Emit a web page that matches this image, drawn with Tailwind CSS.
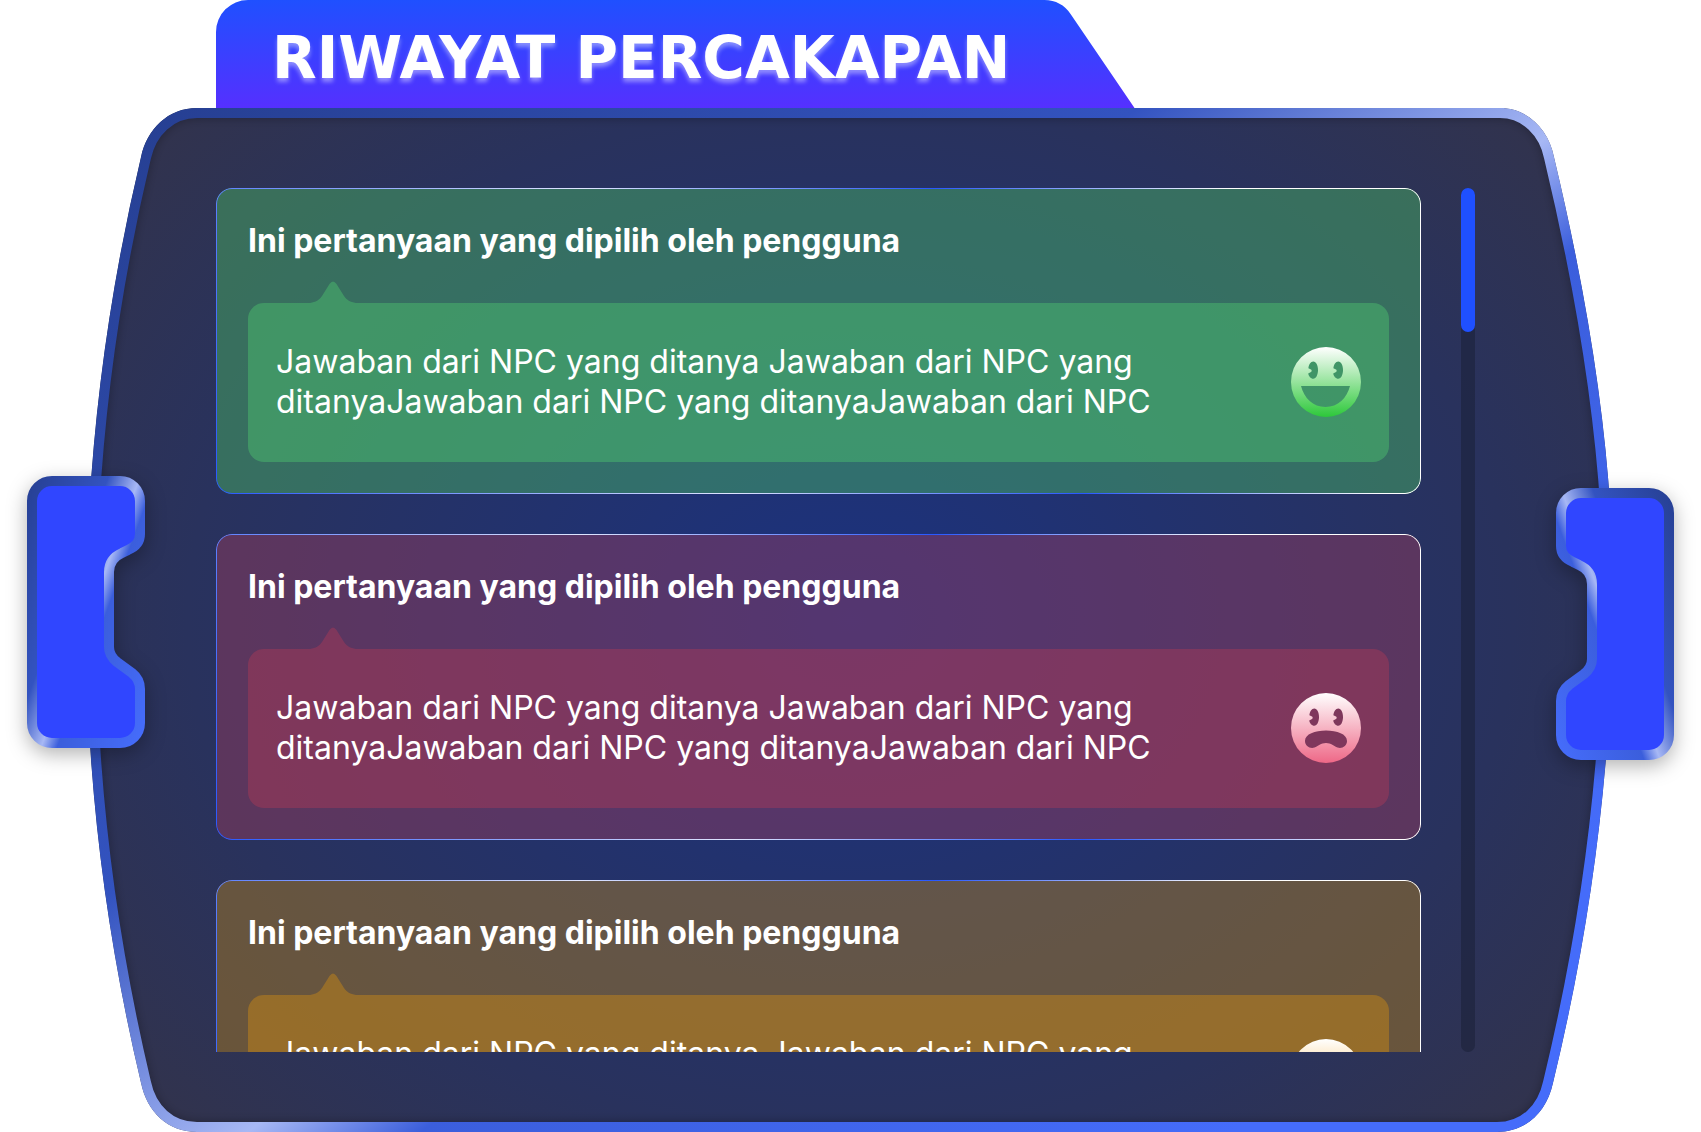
<!DOCTYPE html>
<html lang="id">
<head>
<meta charset="utf-8">
<meta name="viewport" content="width=device-width, initial-scale=1">
<title>Riwayat Percakapan</title>
<script src="https://cdn.jsdelivr.net/npm/@tailwindcss/browser@4"></script>
</head>
<body class="bg-white font-[Inter,sans-serif] text-white">
<main class="relative flex h-screen min-h-[640px] flex-col overflow-hidden">

  <!-- Panel frame -->
  <svg class="absolute inset-0 size-full" viewBox="0 0 1701 1132" preserveAspectRatio="none" aria-hidden="true">
    <defs>
      <linearGradient id="frame" gradientUnits="userSpaceOnUse" x1="104" y1="136" x2="1003" y2="1310">
        <stop offset="0" stop-color="#263f92"/>
        <stop offset=".41" stop-color="#3353c0"/>
        <stop offset=".594" stop-color="#a7b8f5"/>
        <stop offset=".665" stop-color="#3b5edc"/>
        <stop offset="1" stop-color="#456cfa"/>
      </linearGradient>
      <radialGradient id="panel" gradientUnits="userSpaceOnUse" cx="0" cy="0" r="1" gradientTransform="translate(850 620) scale(920 720)">
        <stop offset="0" stop-color="#1b327f"/>
        <stop offset=".72" stop-color="#29325d"/>
        <stop offset="1" stop-color="#31334e"/>
      </radialGradient>
      <filter id="soft" x="-5%" y="-5%" width="110%" height="110%"><feGaussianBlur stdDeviation="5"/></filter>
      <path id="shape" d="M197 108H1500C1528 108 1549 130 1554 157Q1613 404 1613 590Q1613 836 1553 1083C1547 1111 1527 1132 1497 1132H197C168 1132 147 1112 141 1083Q31 620 141 157C147 129 168 108 197 108Z"/>
      <clipPath id="inside"><use href="#shape"/></clipPath>
    </defs>
    <g clip-path="url(#inside)">
      <use href="#shape" fill="url(#panel)"/>
      <use href="#shape" fill="none" stroke="#000" stroke-opacity=".25" stroke-width="22" filter="url(#soft)"/>
      <use href="#shape" fill="none" stroke="url(#frame)" stroke-width="20"/>
    </g>
  </svg>

  <!-- Left grip -->
  <svg class="absolute left-[27px] top-[calc(50%-90px)] h-[272px] w-[118px] overflow-visible drop-shadow-[0_6px_10px_rgb(0_0_0/0.3)]" viewBox="27 476 118 272" aria-hidden="true">
    <defs>
      <linearGradient id="grip" gradientUnits="userSpaceOnUse" x1="177" y1="64" x2="363" y2="132">
        <stop offset="0" stop-color="#263f92"/>
        <stop offset=".39" stop-color="#3353c0"/>
        <stop offset=".54" stop-color="#a7b8f5"/>
        <stop offset=".616" stop-color="#3b5edc"/>
        <stop offset="1" stop-color="#456cfa"/>
      </linearGradient>
      <path id="grip-shape" stroke-width="10" d="M52 481H120A20 20 0 0 1 140 501V534C140 542 135 547 128 550L122 553C113 557 109 563 109 572V647C109 654 112 658 117 662L132 673C137 677 140 682 140 689V723A20 20 0 0 1 120 743H52A20 20 0 0 1 32 723V501A20 20 0 0 1 52 481Z"/>
    </defs>
    <use href="#grip-shape" fill="#3046ff" stroke="url(#grip)"/>
  </svg>

  <!-- Right grip -->
  <div class="absolute right-[27px] top-[calc(50%-78px)] drop-shadow-[0_6px_10px_rgb(0_0_0/0.3)]">
    <svg class="h-[272px] w-[118px] -scale-x-100 overflow-visible" viewBox="27 476 118 272" aria-hidden="true">
      <use href="#grip-shape" fill="#3046ff" stroke="url(#grip)"/>
    </svg>
  </div>

  <!-- Title tab -->
  <header class="relative ml-[216px] flex h-[108px] w-[54%] shrink-0 items-center pl-14">
    <svg class="absolute inset-0 size-full" viewBox="0 0 919 108" preserveAspectRatio="none" aria-hidden="true">
      <defs>
        <linearGradient id="tab" x1="0" y1="0" x2="0" y2="1">
          <stop offset="0" stop-color="#1f50ff"/>
          <stop offset="1" stop-color="#5530ff"/>
        </linearGradient>
      </defs>
      <path fill="url(#tab)" d="M0 108V32A32 32 0 0 1 32 0H829C840 0 849 5 855 14L919 108Z"/>
    </svg>
    <h1 class="relative whitespace-nowrap pt-2 font-['DejaVu_Sans',sans-serif] text-[58px]/[64px] font-bold [text-shadow:0_4px_4px_rgb(255_255_255/0.4)]">RIWAYAT PERCAKAPAN</h1>
  </header>

  <section class="relative flex min-h-0 flex-1 gap-10 pb-20 pl-[216px] pr-[226px] pt-20" aria-label="Riwayat percakapan">
    <div class="flex min-w-0 flex-1 flex-col gap-10 overflow-y-auto [scrollbar-width:none]">

      <article class="relative shrink-0 rounded-2xl bg-[#4dcb63]/40 p-8 before:pointer-events-none before:absolute before:inset-0 before:rounded-2xl before:bg-[linear-gradient(64deg,#2858ff,#dfe5ff_38%,#2858ff_64%,#fff_86%)] before:p-px before:[mask:linear-gradient(#000_0_0)_content-box_exclude,linear-gradient(#000_0_0)]">
        <h2 class="text-[32px]/[42px] font-bold">Ini pertanyaan yang dipilih oleh pengguna</h2>
        <div class="relative mt-[41px] flex items-center justify-between rounded-2xl bg-[#4fd070]/40 px-7 pb-10 pt-[39px]">
          <svg class="absolute bottom-full left-[62px] h-[22px] w-[46px]" viewBox="0 0 46 22" fill="#4fd070" fill-opacity=".4" aria-hidden="true"><path d="M0 22C6 21 9 19 12 15L19.500 3Q23-2 26.500 3L34 15C37 19 40 21 46 22Z"/></svg>
          <p class="text-[32px]/[40px]">Jawaban dari NPC yang ditanya Jawaban dari NPC yang<br>ditanyaJawaban dari NPC yang ditanyaJawaban dari NPC</p>
          <svg class="size-[70px] shrink-0" viewBox="0 0 70 70" role="img" aria-label="Senang">
            <defs><linearGradient id="happy" x1="0" y1="0" x2="0" y2="1"><stop stop-color="#fff"/><stop offset="1" stop-color="#2dc83a"/></linearGradient></defs>
            <path fill="url(#happy)" fill-rule="evenodd" d="M35 0a35 35 0 1 0 0 70a35 35 0 0 0 0-70ZM22.3 14.5c2.8 0 4.7 3.8 4.7 8.5s-1.9 8.8-4.7 8.8c-2.6 0-4.6-2.6-5.1-5.3l2.8-1.5c.9-.5.9-1.9 0-2.4l-2.6-1.4c.3-3.6 2.3-6.7 4.9-6.7ZM47.3 14.5c2.8 0 4.7 3.8 4.7 8.5s-1.9 8.8-4.7 8.8c-2.6 0-4.6-2.6-5.1-5.3l2.8-1.5c.9-.5.9-1.9 0-2.4l-2.6-1.4c.3-3.6 2.3-6.7 4.9-6.7ZM10 39H59C56 51 47 60 34.500 60S13 51 10 39Z"/>
          </svg>
        </div>
      </article>

      <article class="relative shrink-0 rounded-2xl bg-[#aa3c5c]/40 p-8 before:pointer-events-none before:absolute before:inset-0 before:rounded-2xl before:bg-[linear-gradient(64deg,#2858ff,#dfe5ff_38%,#2858ff_64%,#fff_86%)] before:p-px before:[mask:linear-gradient(#000_0_0)_content-box_exclude,linear-gradient(#000_0_0)]">
        <h2 class="text-[32px]/[42px] font-bold">Ini pertanyaan yang dipilih oleh pengguna</h2>
        <div class="relative mt-[41px] flex items-center justify-between rounded-2xl bg-[#b63a56]/40 px-7 pb-10 pt-[39px]">
          <svg class="absolute bottom-full left-[62px] h-[22px] w-[46px]" viewBox="0 0 46 22" fill="#b63a56" fill-opacity=".4" aria-hidden="true"><path d="M0 22C6 21 9 19 12 15L19.500 3Q23-2 26.500 3L34 15C37 19 40 21 46 22Z"/></svg>
          <p class="text-[32px]/[40px]">Jawaban dari NPC yang ditanya Jawaban dari NPC yang<br>ditanyaJawaban dari NPC yang ditanyaJawaban dari NPC</p>
          <svg class="size-[70px] shrink-0" viewBox="0 0 70 70" role="img" aria-label="Kecewa">
            <defs><linearGradient id="sad" x1="0" y1="0" x2="0" y2="1"><stop stop-color="#fff"/><stop offset="1" stop-color="#ee6887"/></linearGradient></defs>
            <path fill="url(#sad)" fill-rule="evenodd" d="M35 0a35 35 0 1 0 0 70a35 35 0 0 0 0-70ZM23.300 15.500c2.800 0 4.700 3.800 4.700 8.500s-1.900 8.800-4.700 8.800c-2.600 0-4.600-2.600-5.100-5.300l2.800-1.500c.9-.5.9-1.900 0-2.400l-2.600-1.400c.3-3.600 2.300-6.700 4.900-6.700ZM47.300 15.500c2.800 0 4.700 3.800 4.700 8.500s-1.900 8.800-4.700 8.800c-2.600 0-4.600-2.600-5.100-5.300l2.800-1.500c.9-.5.9-1.900 0-2.400l-2.600-1.400c.3-3.600 2.300-6.700 4.900-6.700ZM14 48C14 41 24 37.500 35 37.500S56 41 56 48C56 53 51 56 46.500 54.500C43 53 40 50 35 50S27 53 23.500 54.500C19 56 14 53 14 48Z"/>
          </svg>
        </div>
      </article>

      <article class="relative shrink-0 rounded-2xl bg-[#c38a17]/40 p-8 before:pointer-events-none before:absolute before:inset-0 before:rounded-2xl before:bg-[linear-gradient(64deg,#2858ff,#dfe5ff_38%,#2858ff_64%,#fff_86%)] before:p-px before:[mask:linear-gradient(#000_0_0)_content-box_exclude,linear-gradient(#000_0_0)]">
        <h2 class="text-[32px]/[42px] font-bold">Ini pertanyaan yang dipilih oleh pengguna</h2>
        <div class="relative mt-[41px] flex items-center justify-between rounded-2xl bg-[#dc920f]/40 px-7 pb-10 pt-[39px]">
          <svg class="absolute bottom-full left-[62px] h-[22px] w-[46px]" viewBox="0 0 46 22" fill="#dc920f" fill-opacity=".4" aria-hidden="true"><path d="M0 22C6 21 9 19 12 15L19.500 3Q23-2 26.500 3L34 15C37 19 40 21 46 22Z"/></svg>
          <p class="text-[32px]/[40px]">Jawaban dari NPC yang ditanya Jawaban dari NPC yang<br>ditanyaJawaban dari NPC yang ditanyaJawaban dari NPC</p>
          <svg class="size-[70px] shrink-0" viewBox="0 0 70 70" role="img" aria-label="Netral">
            <defs><linearGradient id="neutral" x1="0" y1="0" x2="0" y2="1"><stop stop-color="#fff"/><stop offset="1" stop-color="#f5a623"/></linearGradient></defs>
            <path fill="url(#neutral)" fill-rule="evenodd" d="M35 0a35 35 0 1 0 0 70a35 35 0 0 0 0-70ZM22.3 15.500c2.800 0 4.700 3.800 4.700 8.500s-1.900 8.800-4.700 8.800-4.700-4-4.700-8.800 1.900-8.500 4.700-8.500ZM47.300 15.500c2.800 0 4.700 3.800 4.700 8.500s-1.900 8.800-4.700 8.800-4.700-4-4.700-8.800 1.900-8.500 4.700-8.500ZM18 43H52V50H18Z"/>
          </svg>
        </div>
      </article>
    </div>

    <!-- Scroll track and thumb -->
    <div class="w-[14px] shrink-0 rounded-full bg-[#171d33]/50" aria-hidden="true">
      <div class="h-1/6 rounded-full bg-[#1f50ff]"></div>
    </div>
  </section>
</main>
</body>
</html>
